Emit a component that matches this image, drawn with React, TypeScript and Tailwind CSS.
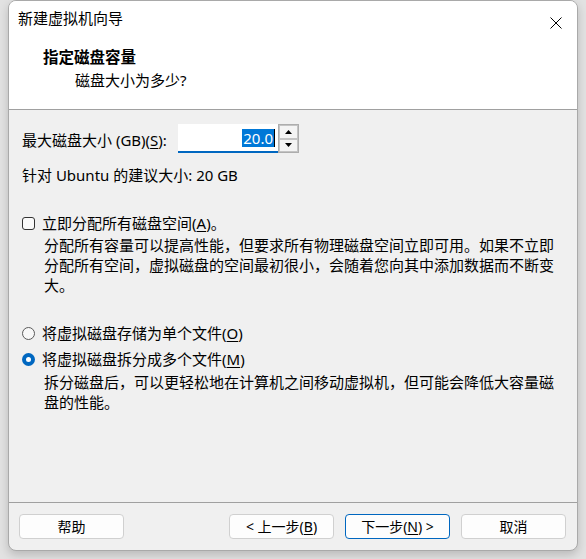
import React from "react";

const font = { fontFamily: '"Noto Sans", "Noto Sans CJK SC", sans-serif' };

const Mnemonic = ({ k }: { k: string }) => (
  <span>
    (<span className="underline underline-offset-2">{k}</span>)
  </span>
);

const Radio = ({ checked }: { checked?: boolean }) =>
  checked ? (
    <span className="w-[13px] h-[13px] rounded-full bg-[#0067c0] flex items-center justify-center shrink-0">
      <span className="w-[5px] h-[5px] rounded-full bg-white" />
    </span>
  ) : (
    <span className="w-[13px] h-[13px] rounded-full border border-[#5a5a5a] bg-[#f8f8f8] shrink-0" />
  );

const Button = ({ label, primary }: { label: React.ReactNode; primary?: boolean }) => (
  <button
    className={
      "w-[105px] h-[25px] rounded-[4px] bg-[#fdfdfd] text-[14px] text-black flex items-center justify-center border " +
      (primary ? "border-[#0067c0]" : "border-[#d0d0d0]")
    }
  >
    {label}
  </button>
);

export default function App() {
  return (
    <div className="w-[586px] h-[559px] bg-[#e2e2e2] pl-[8px] pr-[8px] overflow-hidden" style={font}>
      <div className="w-[570px] h-[551px] flex flex-col rounded-[8px] border border-[#a9a9a9] bg-[#f0f0f0] overflow-hidden shadow-[0_4px_10px_rgba(0,0,0,0.18)]">
        {/* header */}
        <div className="h-[109px] bg-white border-b border-[#a0a0a0] flex flex-col pl-[9px] pt-[7px] relative shrink-0">
          <div className="text-[15px] leading-[20px] text-black">新建虚拟机向导</div>
          <svg className="absolute right-[15px] top-[16px]" width="12" height="12" viewBox="0 0 12 12">
            <path d="M0.5 0.5 L11.5 11.5 M11.5 0.5 L0.5 11.5" stroke="#000" strokeWidth="1" />
          </svg>
          <div className="pl-[25px] mt-[19px] text-[15.5px] leading-[20px] font-bold text-black">指定磁盘容量</div>
          <div className="pl-[57px] mt-[3px] text-[15px] leading-[20px] text-black">磁盘大小为多少?</div>
        </div>

        {/* body */}
        <div className="flex-1 flex flex-col pl-[13px] text-black text-[15px] leading-[20px]">
          <div className="flex items-center mt-[14px] h-[29px]">
            <span className="w-[156px] whitespace-nowrap pt-[2px]">
              最大磁盘大小 (GB)<Mnemonic k="S" />:
            </span>
            <div className="w-[100px] h-[29px] bg-white border-b-2 border-[#0067c0] flex items-center justify-end pr-[3px]">
              <span className="bg-[#0078d7] text-white leading-[18px] px-[1px]">20.0</span>
              <span className="w-px h-[18px] bg-black" />
            </div>
            <div className="w-[21px] h-[29px] border border-[#adadad] bg-[#f0f0f0] flex flex-col">
              <div className="flex-1 border border-[#c4c4c4] bg-[#f4f4f4] flex items-center justify-center">
                <svg width="7" height="4" viewBox="0 0 7 4"><path d="M3.5 0 L7 4 L0 4 Z" fill="#000" /></svg>
              </div>
              <div className="flex-1 border border-[#c4c4c4] bg-[#f4f4f4] flex items-center justify-center">
                <svg width="7" height="4" viewBox="0 0 7 4"><path d="M0 0 L7 0 L3.5 4 Z" fill="#000" /></svg>
              </div>
            </div>
          </div>

          <div className="mt-[12px]">针对 Ubuntu 的建议大小: 20 GB</div>

          <div className="mt-[28px] flex items-center gap-[7px] h-[20px]">
            <span className="w-[13px] h-[13px] rounded-[3px] border border-[#333] bg-[#fafafa] shrink-0" />
            <span>
              立即分配所有磁盘空间<Mnemonic k="A" />。
            </span>
          </div>
          <div className="mt-[2px] pl-[22px] whitespace-nowrap">
            <div>分配所有容量可以提高性能，但要求所有物理磁盘空间立即可用。如果不立即</div>
            <div>分配所有空间，虚拟磁盘的空间最初很小，会随着您向其中添加数据而不断变</div>
            <div>大。</div>
          </div>

          <div className="mt-[28px] flex items-center gap-[7px] h-[20px]">
            <Radio />
            <span>
              将虚拟磁盘存储为单个文件<Mnemonic k="O" />
            </span>
          </div>
          <div className="mt-[6px] flex items-center gap-[7px] h-[20px]">
            <Radio checked />
            <span>
              将虚拟磁盘拆分成多个文件<Mnemonic k="M" />
            </span>
          </div>
          <div className="mt-[3px] pl-[22px] whitespace-nowrap">
            <div>拆分磁盘后，可以更轻松地在计算机之间移动虚拟机，但可能会降低大容量磁</div>
            <div>盘的性能。</div>
          </div>
        </div>

        {/* footer */}
        <div className="h-[48px] border-t border-[#a0a0a0] flex items-start pt-[11px] pl-[10px] pr-[11px] shrink-0">
          <Button label="帮助" />
          <div className="flex-1" />
          <div className="flex gap-[11px]">
            <Button label={<span>&lt; 上一步<Mnemonic k="B" /></span>} />
            <Button label={<span>下一步<Mnemonic k="N" /> &gt;</span>} primary />
            <Button label="取消" />
          </div>
        </div>
      </div>
    </div>
  );
}
